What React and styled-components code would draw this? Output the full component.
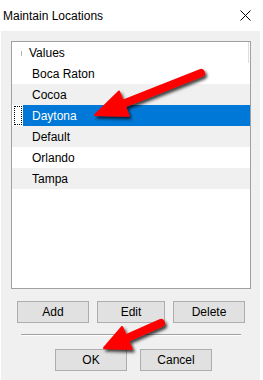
import React from "react";
import styled, { createGlobalStyle } from "styled-components";

const GlobalStyle = createGlobalStyle`
  body {
    margin: 0;
    background: #fff;
    font-family: "Liberation Sans", Arial, sans-serif;
  }
`;

const Window = styled.div`
  position: relative;
  width: 263px;
  height: 380px;
  display: flex;
  flex-direction: column;
  background: #fff;
  overflow: hidden;
`;

const TitleBar = styled.div`
  height: 31px;
  display: flex;
  align-items: center;
  justify-content: space-between;
  padding: 0 12px 0 3px;
  font-size: 12px;
  color: #000;
`;

const Body = styled.div`
  flex: 1;
  margin: 0 3px 0 1px;
  background: #f0f0f0;
  display: flex;
  flex-direction: column;
  padding: 10px 0 0 10px;
`;

const ListBox = styled.div`
  width: 240px;
  height: 248px;
  box-sizing: border-box;
  border: 1px solid #a0a0a0;
  background: #fff;
  display: flex;
  flex-direction: column;
`;

const Row = styled.div`
  height: 21px;
  display: flex;
  font-size: 12px;
  background: ${(p) => (p.$alt ? "#f0f0f0" : "#fff")};
`;

const HeaderRow = styled(Row)`
  border-right: 1px solid #dcdcdc;
  margin-right: 1px;
`;

const RowHead = styled.div`
  width: 11px;
  flex: none;
  display: flex;
  align-items: center;
  justify-content: ${(p) => (p.$end ? "flex-end" : "center")};
`;

const TreeTick = styled.div`
  width: 1px;
  height: 5px;
  margin-right: 1px;
  margin-top: 2px;
  background: #b4b4b4;
`;

const Focus = styled.div`
  width: 8px;
  height: 19px;
  box-sizing: border-box;
  border: 1px dotted #000;
  margin-left: 1px;
`;

const Cell = styled.div`
  flex: 1;
  display: flex;
  align-items: center;
  padding-left: ${(p) => p.$pad}px;
  background: ${(p) => (p.$selected ? "#0078d7" : "transparent")};
  color: ${(p) => (p.$selected ? "#fff" : "#000")};
`;

const ButtonRow = styled.div`
  display: flex;
  gap: ${(p) => p.$gap}px;
  margin-top: ${(p) => p.$top}px;
  padding-left: ${(p) => p.$indent}px;
`;

const Button = styled.button`
  width: ${(p) => p.$w}px;
  height: 22px;
  box-sizing: border-box;
  border: 1px solid #adadad;
  background: #e1e1e1;
  font-family: "Liberation Sans", Arial, sans-serif;
  font-size: 12px;
  color: #000;
  padding: 0;
`;

const Separator = styled.div`
  width: 220px;
  height: 1px;
  margin: 11px 0 0 10px;
  background: #a0a0a0;
  border-bottom: 1px solid #fff;
`;

const Overlay = styled.svg`
  position: absolute;
  left: 0;
  top: 0;
  pointer-events: none;
`;

const items = ["Boca Raton", "Cocoa", "Daytona", "Default", "Orlando", "Tampa"];

function headShape(tip, tail, headLen, half) {
  const dx = tail[0] - tip[0];
  const dy = tail[1] - tip[1];
  const len = Math.hypot(dx, dy);
  const ux = dx / len;
  const uy = dy / len;
  const bx = tip[0] + ux * headLen;
  const by = tip[1] + uy * headLen;
  const a = [bx - uy * half, by + ux * half];
  const b = [bx + uy * half, by - ux * half];
  return {
    base: [tip[0] + ux * (headLen - 4), tip[1] + uy * (headLen - 4)],
    pts: `${tip[0]},${tip[1]} ${a[0]},${a[1]} ${b[0]},${b[1]}`,
  };
}

function Arrow({ tip, tail, headLen, half, width }) {
  const h = headShape(tip, tail, headLen, half);
  return (
    <g filter="url(#shadow)">
      <line x1={tail[0]} y1={tail[1]} x2={h.base[0]} y2={h.base[1]} stroke="#f00" strokeWidth={width} strokeLinecap="round" />
      <polygon points={h.pts} fill="#f00" stroke="#f00" strokeWidth="2" strokeLinejoin="round" />
    </g>
  );
}

export default function App() {
  return (
    <Window>
      <GlobalStyle />
      <TitleBar>
        <span>Maintain Locations</span>
        <svg width="11" height="11" viewBox="0 0 11 11">
          <path d="M0.5 0.5 L10.5 10.5 M10.5 0.5 L0.5 10.5" stroke="#000" strokeWidth="1" />
        </svg>
      </TitleBar>
      <Body>
        <ListBox>
          <HeaderRow>
            <RowHead $end>
              <TreeTick />
            </RowHead>
            <Cell $pad={6}>Values</Cell>
          </HeaderRow>
          {items.map((name, i) => (
            <Row key={name} $alt={i % 2 === 1}>
              <RowHead>{i === 2 && <Focus />}</RowHead>
              <Cell $pad={9} $selected={i === 2}>
                {name}
              </Cell>
            </Row>
          ))}
        </ListBox>
        <ButtonRow $indent={6} $gap={8} $top={12}>
          <Button $w={72}>Add</Button>
          <Button $w={68}>Edit</Button>
          <Button $w={72}>Delete</Button>
        </ButtonRow>
        <Separator />
        <ButtonRow $indent={44} $gap={13} $top={13}>
          <Button $w={72}>OK</Button>
          <Button $w={72}>Cancel</Button>
        </ButtonRow>
      </Body>
      <Overlay width="263" height="380">
        <defs>
          <filter id="shadow" x="-20%" y="-50%" width="140%" height="200%">
            <feDropShadow dx="2" dy="2.5" stdDeviation="1.8" floodColor="#000" floodOpacity="0.75" />
          </filter>
        </defs>
        <Arrow tip={[95, 115]} tail={[201, 73]} headLen={31} half={13} width={8} />
        <Arrow tip={[104, 348]} tail={[161, 323]} headLen={25} half={12} width={8} />
      </Overlay>
    </Window>
  );
}
